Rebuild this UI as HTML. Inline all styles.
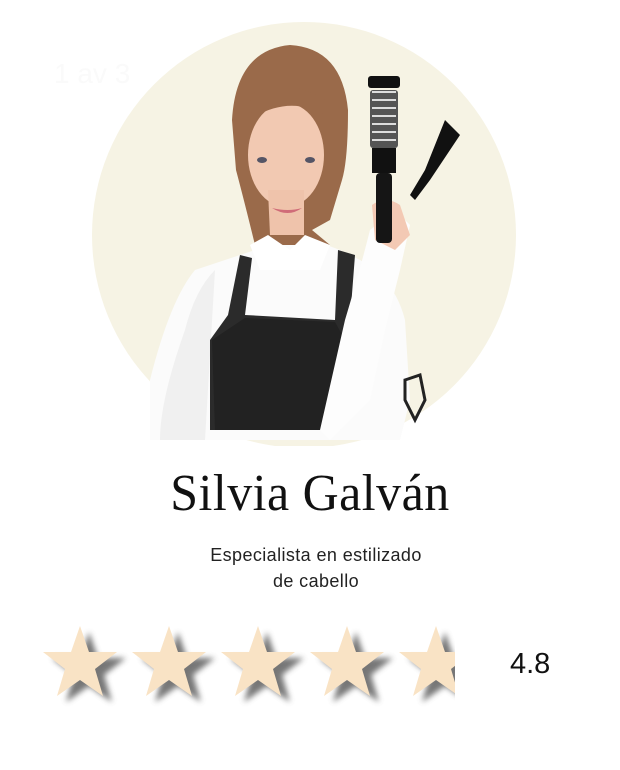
<!DOCTYPE html>
<html><head><meta charset="utf-8"><style>
html,body{margin:0;padding:0;background:#fff;width:620px;height:770px;overflow:hidden;position:relative;font-family:"Liberation Sans",sans-serif}
.abs{position:absolute}
</style></head><body>
<svg class="abs" style="left:0;top:0" width="620" height="450" viewBox="0 0 620 450">
<defs><clipPath id="c"><rect x="0" y="0" width="620" height="446"/></clipPath></defs>
<g clip-path="url(#c)">
<ellipse cx="304" cy="235" rx="212" ry="213" fill="#f6f3e4"/>
<path d="M150 380 Q170 300 195 270 L240 255 L300 235 L340 250 L360 260 Q395 280 405 320 L410 400 L400 440 L150 440 Z" fill="#fbfbfb"/>
<path d="M160 440 Q160 400 185 330 Q195 290 215 270 L205 440Z" fill="#f0f0f0"/>
<path d="M240 255 L228 315 L210 340 L210 430 L330 430 L340 360 L350 320 L355 255 L338 250 L335 320 L245 315 L252 258 Z" fill="#2b2b2b"/>
<path d="M245 318 L335 322 L345 340 L340 430 L215 430 L212 340 Z" fill="#222"/>
<path d="M345 320 Q360 270 370 230 L395 210 L410 225 L400 270 L385 330 L370 400 L330 440 L320 430 Z" fill="#fdfdfd"/>
<path d="M372 205 Q385 195 400 205 L410 235 L395 250 L375 240 Z" fill="#f3c9b4"/>
<path d="M232 120 Q236 50 290 45 Q342 48 348 110 Q348 160 342 180 L330 220 L312 230 L330 245 L255 245 Q244 200 236 170 Z" fill="#9a6a4a"/>
<ellipse cx="286" cy="155" rx="38" ry="52" fill="#f2c9b2"/>
<path d="M268 190 L304 190 L304 235 L270 235Z" fill="#efc3ab"/>
<path d="M250 95 Q285 75 325 100 L325 115 Q290 95 252 118Z" fill="#9a6a4a"/>
<ellipse cx="262" cy="160" rx="5" ry="3" fill="#556"/>
<ellipse cx="310" cy="160" rx="5" ry="3" fill="#556"/>
<path d="M272 208 Q288 218 302 208 Q288 212 272 208Z" fill="#d06c78"/>
<path d="M250 245 L268 235 L290 250 L305 235 L330 245 L320 270 L260 270Z" fill="#fff"/>
<rect x="370" y="90" width="28" height="58" rx="3" fill="#555"/>
<rect x="368" y="76" width="32" height="12" rx="3" fill="#111"/>
<path d="M372 92 h24 M372 100 h24 M372 108 h24 M372 116 h24 M372 124 h24 M372 132 h24 M372 140 h24" stroke="#ddd" stroke-width="2"/>
<rect x="372" y="148" width="24" height="25" fill="#111"/>
<rect x="376" y="173" width="16" height="70" rx="4" fill="#151515"/>
<path d="M445 120 L460 135 L430 180 L415 200 L410 195 L425 170Z" fill="#111"/>
<path d="M405 380 L420 375 L425 400 L415 420 L405 400Z" fill="none" stroke="#222" stroke-width="3"/>
</g>
</svg>
<div class="abs" style="left:54px;top:58px;font-size:28px;color:#fafafa">1 av 3</div>
<div class="abs" style="left:0;width:620px;top:464px;text-align:center;font-family:'Liberation Serif',serif;font-size:52px;color:#111;letter-spacing:0.5px;transform:scaleX(0.96)">Silvia Galván</div>
<div class="abs" style="left:0;width:632px;top:542px;text-align:center;font-size:18px;line-height:26px;letter-spacing:0.4px;color:#222">Especialista en estilizado<br>de cabello</div>
<svg class="abs" style="left:0;top:610px" width="620" height="110" viewBox="0 0 620 110">
<defs>
<filter id="s" x="-30%" y="-30%" width="170%" height="170%"><feGaussianBlur stdDeviation="3"/></filter>
<clipPath id="k"><rect x="0" y="0" width="455" height="110"/></clipPath>
<path id="st" d="M0 -38 L9 -12 L37 -12 L15 5 L23 32 L0 16 L-23 32 L-15 5 L-37 -12 L-9 -12Z"/>
</defs>
<g clip-path="url(#k)">
<g fill="#555" opacity="0.8" filter="url(#s)">
<use href="#st" x="89" y="60"/><use href="#st" x="178" y="60"/><use href="#st" x="267" y="60"/><use href="#st" x="356" y="60"/><use href="#st" x="445" y="60"/>
</g>
<g fill="#f9e3c5">
<use href="#st" x="80" y="54"/><use href="#st" x="169" y="54"/><use href="#st" x="258" y="54"/><use href="#st" x="347" y="54"/><use href="#st" x="436" y="54"/>
</g>
</g>
</svg>
<div class="abs" style="left:510px;top:648px;font-size:29px;color:#111">4.8</div>
</body></html>
